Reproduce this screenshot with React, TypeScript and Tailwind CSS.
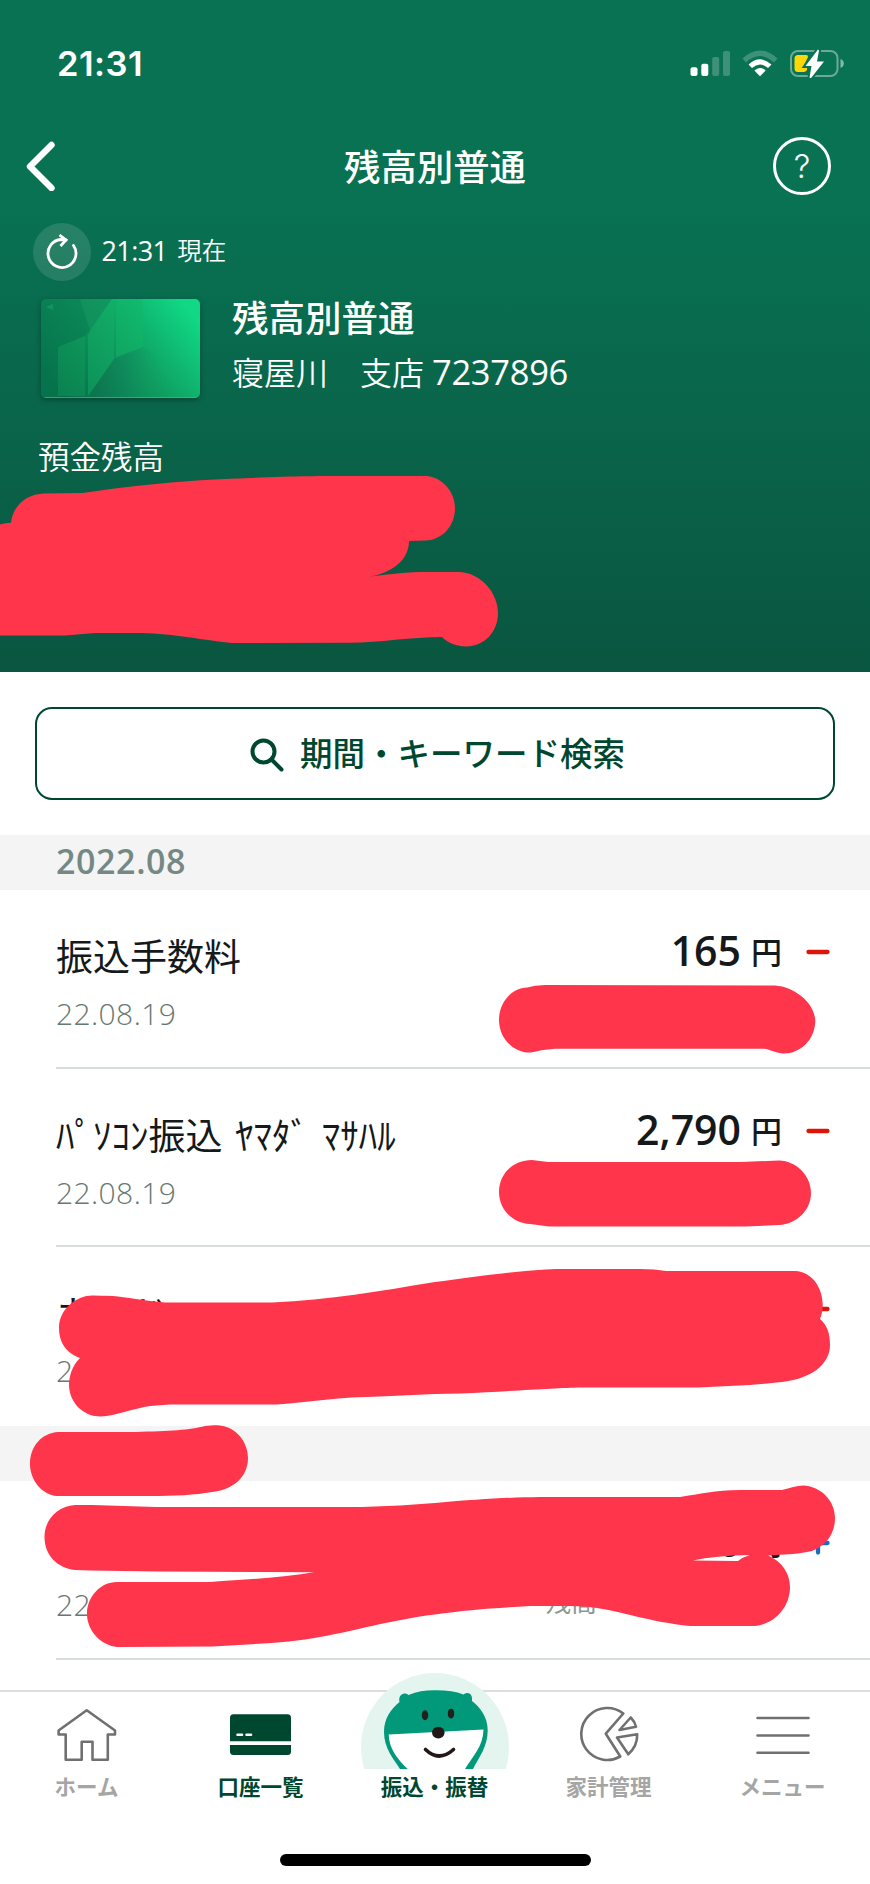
import React from "react";

interface Transaction {
  id: string;
  title: string;
  date: string;
  amount: string;
  balance?: string;
  type: "in" | "out";
}

interface TransactionGroup {
  month: string;
  items: Transaction[];
}

const groups: TransactionGroup[] = [
  {
    month: "2022.08",
    items: [
      { id: "1", title: "振込手数料", date: "22.08.19", amount: "165", type: "out" },
      { id: "2", title: "ﾊﾟｿｺﾝ振込 ﾔﾏﾀﾞ ﾏｻﾊﾙ", date: "22.08.19", amount: "2,790", type: "out" },
      { id: "3", title: "カード", date: "2", amount: "0", type: "out" },
    ],
  },
  {
    month: "",
    items: [
      { id: "4", title: "", date: "22", amount: "0", balance: "残高", type: "in" },
    ],
  },
];

const StatusBar: React.FC = () => (
  <div className="flex h-[108px] items-start justify-between pt-[43px] pr-[25px] pl-[57px]">
    <span className="font-['Inter',sans-serif] text-[34.500px] leading-[41px] font-semibold tracking-[0.5px]">
      21:31
    </span>
    <svg className="mt-[5px]" width="156" height="32" viewBox="689 48 156 32" fill="none">
      <rect x="690.5" y="67.3" width="7" height="8.7" rx="2" fill="#fff" />
      <rect x="701.3" y="63.7" width="7" height="12.3" rx="2" fill="#fff" />
      <rect x="712.2" y="57" width="7" height="19" rx="2" fill="#fff" fillOpacity=".22" />
      <rect x="723" y="51" width="7" height="25" rx="2" fill="#fff" fillOpacity=".22" />
      <path
        d="M742.5 58.5Q760 42.5 777.5 58.5L774 62.5Q760 49.5 746 62.5Z"
        fill="#fff"
        fillOpacity=".22"
      />
      <path d="M748.5 64.5Q760 54 771.5 64.5L768 68Q760 61 752 68Z" fill="#fff" />
      <path d="M754.3 70.5Q760 65.5 765.7 70.5L760 76.3Z" fill="#fff" />
      <rect x="791" y="51" width="46.5" height="25" rx="7" stroke="#fff" strokeOpacity=".4" strokeWidth="2" />
      <path d="M840.5 59Q843.8 60.3 843.8 63.5T840.5 68Z" fill="#fff" fillOpacity=".5" />
      <path d="M798 55h8.5q1.5 0 1.5 2l-4 8h3v5q-1.500 2-3 2h-6q-3.500 0-3.500-3.500v-10Q794.500 55 798 55Z" fill="#ffd60a" />
      <path
        d="M818 49.5L805.5 66h6l-2 11.5q1 1 2 0L824 61.5h-7l2-11Z"
        fill="#fff"
        stroke="#087252"
        strokeWidth="4"
        paintOrder="stroke"
      />
    </svg>
  </div>
);

const TitleBar: React.FC = () => (
  <div className="flex h-[116px] items-center justify-between pr-[39px] pl-[25px]">
    <svg width="58" height="50" viewBox="0 0 58 50" fill="none">
      <path d="M26.5 4L5 25.5L26.5 47" stroke="#fff" strokeWidth="6.4" strokeLinecap="round" strokeLinejoin="round" />
    </svg>
    <h1 className="mt-[2px] ml-[14px] text-[36.400px] leading-[52px] font-medium">残高別普通</h1>
    <button className="flex size-[58px] items-center justify-center rounded-full border-[3px] border-white font-['Inter',sans-serif] text-[33px] leading-none font-[350]">
      ?
    </button>
  </div>
);

const CardImage: React.FC = () => (
  <svg className="rounded-[5px] shadow-[0_2px_5px_rgba(0,40,30,0.5)]" width="159" height="99" viewBox="0 0 159 99">
    <defs>
      <linearGradient id="base" x1="0" y1=".75" x2="1" y2=".25">
        <stop offset="0" stopColor="#046a49" />
        <stop offset=".5" stopColor="#0f9a5f" />
        <stop offset="1" stopColor="#10d884" />
      </linearGradient>
      <linearGradient id="shade" x1="0" y1="0" x2="1" y2="0">
        <stop offset="0" stopColor="#10704c" stopOpacity=".8" />
        <stop offset=".45" stopColor="#10805a" stopOpacity=".45" />
        <stop offset=".9" stopColor="#10a066" stopOpacity="0" />
      </linearGradient>
    </defs>
    <rect width="159" height="99" fill="url(#base)" />
    <path d="M0 0H39L49 31L44 37L17 48V99H0Z" fill="#0a7a50" fillOpacity=".55" />
    <path d="M17 48L44 37V97H17Z" fill="#11a05c" fillOpacity=".45" />
    <path d="M39 0H71L49 31Z" fill="#128f5c" fillOpacity=".7" />
    <path d="M71 0H73V60L47 97V36L50 30Z" fill="#15b266" fillOpacity=".45" />
    <path d="M75 0H102V48L75 58Z" fill="#12b568" fillOpacity=".5" />
    <path d="M73 60L102 48L130 70V99H47Z" fill="url(#shade)" />
    <path d="M5 8L12 5V11Z" fill="#12945f" />
    <path d="M0 98.5H159" stroke="#4fb287" strokeOpacity=".7" />
  </svg>
);

const AccountHeader: React.FC = () => (
  <header className="h-[672px] shrink-0 bg-linear-to-b from-[#087252] from-30% to-[#0a5640] text-white">
    <StatusBar />
    <TitleBar />
    <div className="flex h-[56px] items-center pl-[32.500px]">
      <div className="flex size-[58px] items-center justify-center rounded-full bg-white/12">
        <svg width="32" height="38" viewBox="0 0 32 38" fill="none" stroke="#fff" strokeWidth="2.8">
          <path d="M27.5 12.5A14 14 0 1 1 15 6.5L20 7" strokeLinecap="round" />
          <path d="M13.5 2L20 7L14.5 13" />
        </svg>
      </div>
      <span className="-mt-[2px] ml-[11px] text-[27px] font-normal tracking-[-0.6px]">21:31</span>
      <span className="-mt-[2px] ml-[10px] text-[24.500px] font-[350]">現在</span>
    </div>
    <div className="flex pt-[19px] pl-[41px]">
      <CardImage />
      <div className="ml-[32px]">
        <h2 className="-mt-[8px] text-[36.500px] leading-[54px] font-medium">残高別普通</h2>
        <p className="flex items-baseline text-[32px] leading-[54px] font-[350]">
          寝屋川　支店
          <span className="ml-[8px] text-[34.500px] font-normal tracking-[-0.3px]">7237896</span>
        </p>
      </div>
    </div>
    <p className="mt-[33px] pl-[38px] text-[31.500px] leading-[48px] font-[350]">預金残高</p>
  </header>
);

const SearchButton: React.FC = () => (
  <div className="shrink-0 px-[35px] pt-[35px] pb-[34.500px]">
    <button className="flex h-[93px] w-full items-center justify-center rounded-[17px] border-[2.500px] border-[#00472f] pt-[2px] pl-[5px] text-[32.500px] font-medium text-[#00472f]">
      <svg className="mr-[16px]" width="34" height="34" viewBox="0 0 34 34" fill="none" stroke="#00472f" strokeWidth="4">
        <circle cx="13.5" cy="13.5" r="11" />
        <path d="M21.5 21.5L31.5 31.5" strokeLinecap="round" />
      </svg>
      期間・キーワード検索
    </button>
  </div>
);

const TransactionRow: React.FC<{ tx: Transaction; last: boolean }> = ({ tx, last }) => (
  <li className="pl-[56px]">
    <div
      className={
        last
          ? "flex h-[178.500px] justify-between pr-[40px]"
          : "flex h-[178.500px] justify-between border-b-[2.500px] border-[#d6dddb] pr-[40px]"
      }
    >
      <div>
        <h3 className="mt-[39px] h-[56px] text-[37px] leading-[56px] [word-spacing:3px] whitespace-pre text-[#15191a]">
          {tx.title}
        </h3>
        <time className="mt-[9px] block text-[30px] leading-[40px] font-[350] tracking-[0.4px] text-[#667872]">
          {tx.date}
        </time>
      </div>
      <div className="flex flex-col items-end">
        <div className="mt-[34px] flex h-[56px] items-center">
          <span className="-mt-[4px] text-[41px] leading-[56px] font-semibold text-[#15191a]">{tx.amount}</span>
          <span className="ml-[10px] text-[31px] leading-[56px] font-medium text-[#15191a]">円</span>
          <svg className="ml-[24px]" width="24" height="24" viewBox="0 0 24 24" strokeWidth="4.3" strokeLinecap="round">
            <path
              d={tx.type === "in" ? "M2.5 12H21.5M12 2.5V21.5" : "M2.5 12H21.5"}
              stroke={tx.type === "in" ? "#1470c4" : "#dd1408"}
            />
          </svg>
        </div>
        {tx.balance && (
          <span className="mt-[11px] mr-[233px] text-[26px] leading-[40px] text-[#8a9894]">{tx.balance}</span>
        )}
      </div>
    </div>
  </li>
);

const TransactionList: React.FC = () => (
  <main className="min-h-0 flex-1 overflow-hidden">
    {groups.map((group, idx) => (
      <section key={idx}>
        <h2 className="h-[55.500px] bg-[#f4f4f4] pl-[56px] text-[34px] leading-[53px] font-semibold tracking-[0.6px] text-[#758882]">
          {group.month}
        </h2>
        <ul>
          {group.items.map((tx, i) => (
            <TransactionRow key={tx.id} tx={tx} last={idx === 0 && i === group.items.length - 1} />
          ))}
        </ul>
      </section>
    ))}
  </main>
);

const HomeIcon: React.FC = () => (
  <svg width="60" height="54" viewBox="57 1708 60 54" fill="none" stroke="#707070" strokeWidth="2.6" strokeLinejoin="round">
    <path d="M86.7 1710.3L58.6 1730.5V1734.5H65.7V1759.7H81.7V1741.7H92.5V1759.7H107.8V1734.5H115V1730.5Z" />
  </svg>
);

const AccountsIcon: React.FC = () => (
  <svg width="62" height="54" viewBox="230 1708 62 54">
    <path d="M233.5 1714.3H287.5Q291 1714.3 291 1717.8V1741.2H230V1717.8Q230 1714.3 233.5 1714.3Z" fill="#00472f" />
    <path d="M230 1745H291V1751.5Q291 1755 287.5 1755H233.5Q230 1755 230 1751.5Z" fill="#00472f" />
    <path d="M237.5 1734.8H242M246.5 1734.8H251" stroke="#fff" strokeWidth="2.6" strokeLinecap="round" />
  </svg>
);

const MascotIcon: React.FC = () => (
  <svg width="148" height="96" viewBox="0 0 148 96">
    <circle cx="74" cy="74" r="74" fill="#e4f5f0" />
    <path
      d="M39 96C33 86 23 76 23 59C23 45 30 36 38.5 29C37 23 42 18 47.5 22C57 18 66 17 75.7 17.3C86 17.3 95 18.5 102.5 21.6C107 18 112 21 111 28C119 34 126.7 44 126.7 57C126.7 74 118 84 112 96Z"
      fill="#02997a"
    />
    <path d="M27.7 61.6L122.5 56.6C122 74 112 83 104 96H46.7C37 87 28 76 27.7 61.6Z" fill="#fff" />
    <ellipse cx="64" cy="42.3" rx="3.2" ry="5" fill="#231f1c" />
    <ellipse cx="90" cy="40.6" rx="3.2" ry="4.8" fill="#231f1c" />
    <ellipse cx="77.3" cy="59.6" rx="6.3" ry="5.8" fill="#231815" />
    <path d="M64.5 76.5Q78 89.5 92.5 76.5" fill="none" stroke="#231815" strokeWidth="3.6" strokeLinecap="round" />
  </svg>
);

const BudgetIcon: React.FC = () => (
  <svg width="60" height="56" viewBox="579 1708 60 56" fill="none" stroke="#707070" strokeWidth="2.6" strokeLinejoin="round">
    <path d="M623.3 1715.5A26 26 0 1 0 620.3 1758.5L605.8 1735.7Z" />
    <path d="M630.7 1719.5Q634.8 1723.5 636 1728.7L619.5 1732Z" />
    <path d="M617 1739.5L637.2 1736.3Q637.5 1748 628.3 1756.3Z" />
  </svg>
);

const MenuIcon: React.FC = () => (
  <svg width="56" height="54" viewBox="755 1708 56 54" stroke="#707070" strokeWidth="2.6" strokeLinecap="round">
    <path d="M757.5 1718H808.5M757.5 1735.5H808.5M757.5 1752.8H808.5" />
  </svg>
);

const tabs = [
  { label: "ホーム", icon: <HomeIcon />, active: false },
  { label: "口座一覧", icon: <AccountsIcon />, active: true },
  { label: "振込・振替", icon: <MascotIcon />, active: true },
  { label: "家計管理", icon: <BudgetIcon />, active: false },
  { label: "メニュー", icon: <MenuIcon />, active: false },
];

const TabBar: React.FC = () => (
  <nav className="h-[194px] shrink-0 border-t-2 border-[#dddddd] bg-white">
    <div className="grid h-[112px] grid-cols-5">
      {tabs.map((tab) => (
        <div key={tab.label} className="flex flex-col items-center">
          <div className="flex h-[77px] items-end">
            <span className={tab.label === "振込・振替" ? "block" : "mb-[7px] block"}>{tab.icon}</span>
          </div>
          <span
            className={
              tab.active
                ? "mt-[3px] mr-[1px] text-[21.500px] leading-[30px] font-bold text-[#00472f]"
                : "mt-[3px] mr-[1px] text-[21.500px] leading-[30px] font-bold text-[#a5a5a5]"
            }
          >
            {tab.label}
          </span>
        </div>
      ))}
    </div>
    <div className="mx-auto mt-[50px] h-[11.500px] w-[311px] rounded-full bg-black" />
  </nav>
);

// hand-drawn strokes that hide the private details
const strokes = [
  "M-5 526Q3 523 11 522.7C13 505 27 494 44 493.5L83 493C150 483 195 480 250 478C290 476 330 476 335 476L427 476C443 478 455 492 455 508C455 527 441 540.5 425 540.5L409 541C409 560 392 573 369 576.7C385 575 400 572.5 420 572L460 572C480 573 498 592 498 613C498 632 484 646.5 466 646.5C457 646.5 448 643 442 637C410 637 380 642.7 350 642.7L232 643C195 639 170 633 135 633L95 633L65 635.5L-5 635.5Z",
  "M545 985L775 985.5C795 987 815 1003 815.3 1021C815 1040 800 1053.5 784 1053.5C776 1053.5 770 1049 764 1048.7L555 1048.7Q540 1050 531 1052.5C513 1053 499 1038 499 1020C499 1002 512 988 527 987.5Q535 985 545 985Z",
  "M532 1160L548 1162L741 1162L779 1160.5C797 1161 811 1176 811 1193C811 1210 797 1224 779 1225L745 1226.5L549 1226.5L530 1224C512 1223 499 1209 499 1192C499 1174 513 1160 532 1160Z",
  "M92 1295.5C78 1295.5 59 1308 59 1328C59 1345 69 1354 80 1358C72 1366 69 1376 69 1386C70 1403 83 1416.5 101 1416.5C115 1416 135 1408 150 1406L170 1404.5L277 1404.5C310 1402 340 1397 380 1396.5L435 1394L461 1393.5C510 1391 560 1388 580 1387.5L698 1387.5L750 1385L782 1382C810 1379 830 1365 830 1345C830 1333 827 1325 820 1319C828 1300 818 1272 795 1271L666 1271Q655 1269 640 1269L556 1269C510 1271 470 1278 435 1282C380 1291 330 1300 272 1302.5L165 1302.5C145 1301 125 1297 113 1296Z",
  "M58 1432L135 1432C170 1431 190 1430 205 1426C212 1425 218 1425 220 1425.5C236 1427 248 1442 248 1458C248 1477 233 1490 212 1492C195 1495 175 1496 150 1496L57 1496C42 1495 30 1480 30 1464C30 1446 42 1433 58 1432Z",
  "M75 1505L92 1505L156 1507L362 1507L400 1505.5L435 1503C480 1499 510 1497.5 540 1497L680 1497C700 1494 715 1490 740 1490L782 1490C790 1488 797 1485.5 803 1485.5C820 1486 835 1500 835 1518C835 1536 824 1546 812 1551Q800 1554 780 1554.7L768 1555.5C782 1561 790 1574 790 1587C790 1607 775 1624 755 1626L690 1626C650 1622 620 1611 597 1608Q585 1606 570 1606L530 1606C495 1608 465 1610 435 1614.5C390 1620 350 1632 320 1637C290 1643 250 1644 213 1646.5L117 1647C100 1645 87 1630 87 1614C87 1597 100 1582 117 1582L210 1582C250 1579 280 1578 314 1572.3L157 1571.5L90 1570.5L75 1570C57 1568 44.5 1555 44.5 1537C44.5 1520 57 1506 75 1505ZM693 1560.5L738 1561Q743 1557 750 1555Q715 1555.5 693 1560.5Z",
];

const Redactions: React.FC = () => (
  <svg className="pointer-events-none absolute inset-0" width="870" height="1884" viewBox="0 0 870 1884" fill="#ff354c" fillRule="evenodd">
    {strokes.map((d) => (
      <path key={d} d={d} />
    ))}
  </svg>
);

const App: React.FC = () => {
  return (
    <div
      lang="ja"
      className="relative flex h-[1884px] w-[870px] flex-col overflow-hidden bg-white font-['Open_Sans','Noto_Sans_CJK_JP',sans-serif]"
    >
      <AccountHeader />
      <SearchButton />
      <TransactionList />
      <TabBar />
      <Redactions />
    </div>
  );
};

export default App;
